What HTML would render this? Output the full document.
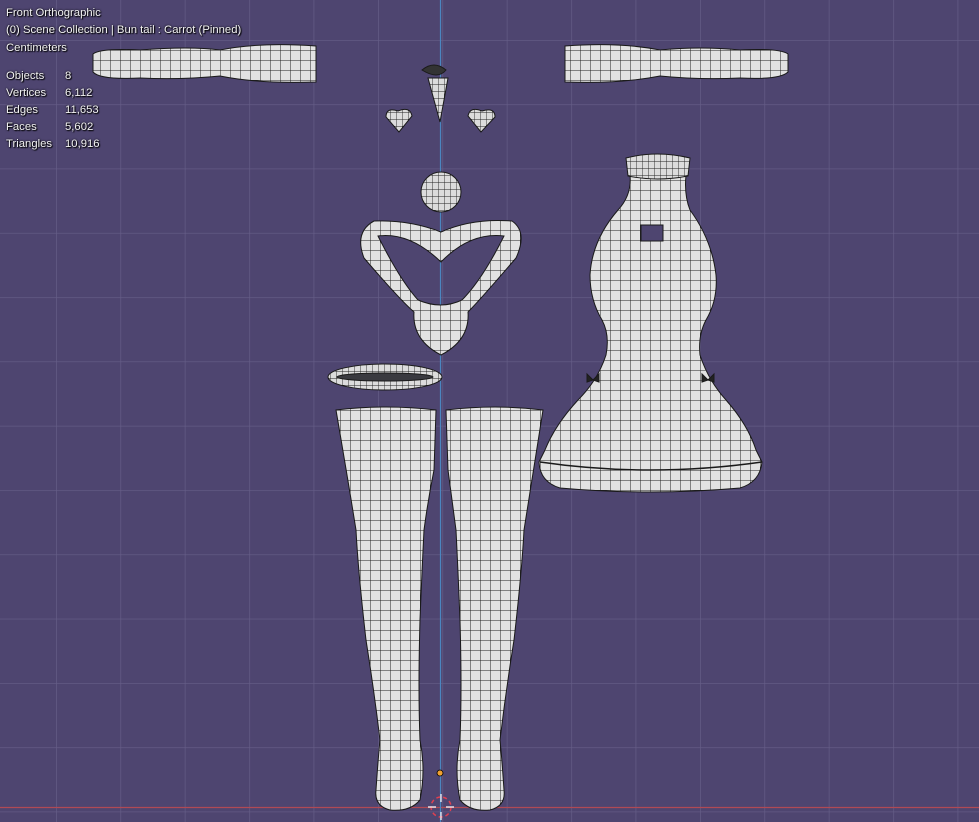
<!DOCTYPE html>
<html><head><meta charset="utf-8"><style>
html,body{margin:0;padding:0;width:979px;height:822px;overflow:hidden;background:#4e4570;}
svg{position:absolute;left:0;top:0}
.t{position:absolute;left:6px;color:#f2f2f2;font:11.3px "Liberation Sans",sans-serif;text-shadow:0 0 2px #000,1px 1px 1px #000;white-space:nowrap}
</style></head><body>
<svg width="979" height="822" viewBox="0 0 979 822">
<defs>
<pattern id="g" width="64.4" height="64.3" patternUnits="userSpaceOnUse" x="56" y="40">
<path d="M0 0V64.3M0 0H64.4" stroke="#665e88" stroke-width="1.3" fill="none"/>
</pattern>
<pattern id="w" width="10" height="10" patternUnits="userSpaceOnUse">
<rect width="10" height="10" fill="#e2e2e2"/>
<path d="M0 0V10M0 0H10" stroke="#222" stroke-width="1" fill="none"/>
</pattern>
<pattern id="w2" width="6" height="7" patternUnits="userSpaceOnUse">
<rect width="6" height="7" fill="#dcdcdc"/>
<path d="M0 0V7M0 0H6" stroke="#222" stroke-width="0.9" fill="none"/>
</pattern>
</defs>
<rect width="979" height="822" fill="url(#g)"/>
<line x1="0" y1="807.5" x2="979" y2="807.5" stroke="#b04a55" stroke-width="1.2"/>
<line x1="440.5" y1="0" x2="440.5" y2="822" stroke="#4b86c0" stroke-width="1.2"/>
<g stroke="#1a1a1a" stroke-width="1">
<path d="M93 54 Q100 48 140 50 Q190 46 220 50 Q260 42 316 46 L316 82 Q260 84 220 76 Q180 80 140 78 Q100 80 93 72 Z" fill="url(#w)"/>
<path d="M565 46 Q620 42 660 50 Q700 46 740 50 Q780 48 788 54 L788 72 Q780 80 740 78 Q700 80 660 76 Q620 84 565 82 Z" fill="url(#w)"/>
<path d="M428 78 L448 78 L440 122 Z" fill="url(#w2)"/>
<path d="M422 70 Q434 60 446 70 Q438 80 422 70Z" fill="#333"/>
<path d="M399 132 L386 117 Q386 107 398 111 Q410 106 412 116 Z" fill="url(#w2)"/>
<path d="M481 132 L468 116 Q470 106 482 111 Q495 107 495 117 Z" fill="url(#w2)"/>
<circle cx="441" cy="192" r="20" fill="url(#w2)"/>
<path d="M374 221 Q410 220 441 232 Q472 218 512 221 Q528 232 516 258 Q480 300 468 312 Q470 340 441 355 Q412 340 414 312 Q400 300 364 258 Q354 232 374 221Z M378 236 Q400 280 418 300 Q441 310 462 300 Q482 280 504 236 Q470 232 441 262 Q410 232 378 236Z" fill="url(#w)" fill-rule="evenodd"/>
<ellipse cx="385" cy="377" rx="57" ry="13" fill="url(#w2)"/>
<ellipse cx="385" cy="377" rx="48" ry="4" fill="#3a3a40"/>
<!-- legs -->
<path d="M336 410 Q386 404 436 410 L434 470 Q428 500 424 530 Q422 570 420 620 Q418 690 420 740 Q426 770 420 800 Q410 812 390 810 Q374 806 376 790 Q378 760 380 740 Q374 690 366 640 Q358 570 356 530 Q348 480 336 410Z" fill="url(#w)"/>
<path d="M446 410 Q496 404 543 410 Q532 480 524 530 Q522 570 514 640 Q506 690 500 740 Q502 760 504 790 Q506 806 490 810 Q470 812 460 800 Q454 770 460 740 Q462 690 460 620 Q458 570 456 530 Q452 500 448 470Z" fill="url(#w)"/>
<!-- dress -->
<path d="M630 175 L686 175 Q684 195 690 210 Q712 240 716 275 Q718 300 706 320 Q698 335 700 355 Q708 380 726 400 Q748 425 756 450 L762 462 Q760 482 740 488 Q650 496 560 488 Q540 482 539 462 L545 450 Q555 425 578 400 Q598 380 606 355 Q610 335 602 320 Q590 300 590 275 Q592 240 618 210 Q632 195 630 175Z" fill="url(#w)"/>
<rect x="641" y="225" width="22" height="16" fill="#4e4570"/>
<path d="M626 158 Q657 150 690 158 L688 176 Q657 182 628 176Z" fill="url(#w2)"/>
<path d="M540 462 Q650 478 762 462" fill="none" stroke-width="1.5"/>
<path d="M587 374 l6 6 l6 -6 v8 l-6 -2 l-6 2z M702 374 l6 6 l6 -6 v8 l-6 -2 l-6 2z" fill="#222"/>
</g>
<circle cx="440" cy="773" r="3" fill="#f0a030" stroke="#000" stroke-width="0.8"/>
<circle cx="441" cy="807" r="10" fill="none" stroke="#e04050" stroke-width="1.5" stroke-dasharray="4 3"/>
<path d="M441 794v8M441 812v8M428 807h8M446 807h8" stroke="#fff" stroke-width="1.2"/>
</svg>
<div class="t" style="top:7px">Front Orthographic</div>
<div class="t" style="top:24px">(0) Scene Collection | Bun tail : Carrot (Pinned)</div>
<div class="t" style="top:42px">Centimeters</div>
<div class="t" style="top:70px">Objects</div><div class="t" style="top:70px;left:65px">8</div>
<div class="t" style="top:87px">Vertices</div><div class="t" style="top:87px;left:65px">6,112</div>
<div class="t" style="top:104px">Edges</div><div class="t" style="top:104px;left:65px">11,653</div>
<div class="t" style="top:121px">Faces</div><div class="t" style="top:121px;left:65px">5,602</div>
<div class="t" style="top:138px">Triangles</div><div class="t" style="top:138px;left:65px">10,916</div>
</body></html>
